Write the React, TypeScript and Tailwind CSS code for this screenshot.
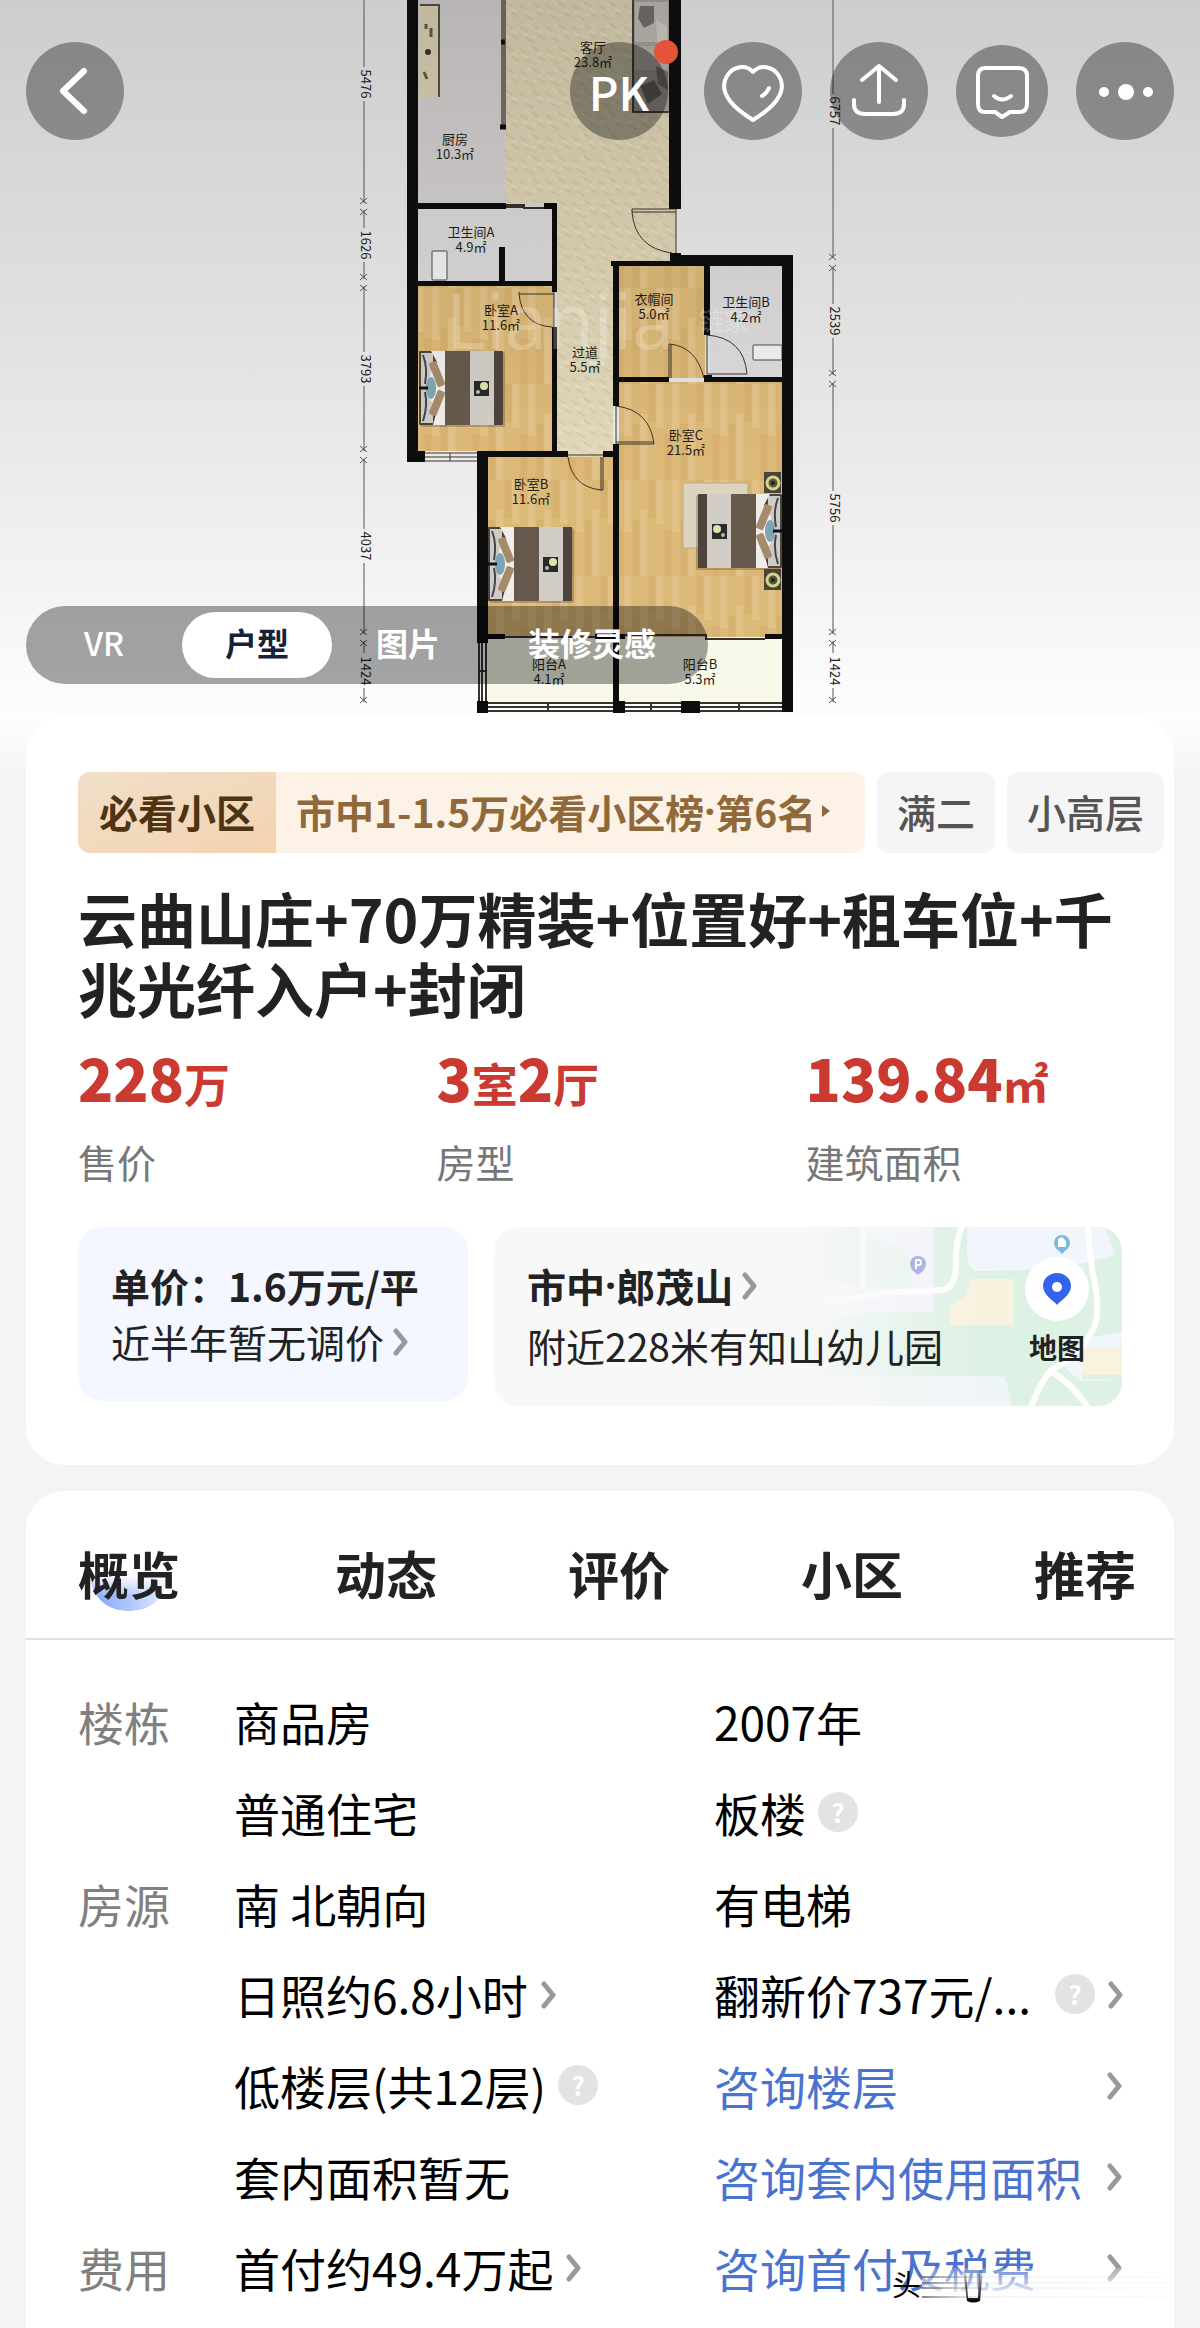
/**
 * Ficha de una vivienda: plano, datos principales y tabla de detalles
 */

import type { ReactNode } from 'react';

const fotoTabs = ['VR', '户型', '图片', '装修灵感'];

const secciones = ['动态', '评价', '小区', '推荐'];

type Celda = {
  texto: string;
  enlace?: boolean;
  ayuda?: boolean;
  flecha?: boolean;
  alFinal?: boolean;
};

const filas: { grupo: string; a: Celda; b: Celda }[] = [
  { grupo: '楼栋', a: { texto: '商品房' }, b: { texto: '2007年' } },
  { grupo: '', a: { texto: '普通住宅' }, b: { texto: '板楼', ayuda: true } },
  { grupo: '房源', a: { texto: '南 北朝向' }, b: { texto: '有电梯' } },
  {
    grupo: '',
    a: { texto: '日照约6.8小时', flecha: true },
    b: { texto: '翻新价737元/...', ayuda: true, flecha: true, alFinal: true },
  },
  {
    grupo: '',
    a: { texto: '低楼层(共12层)', ayuda: true },
    b: { texto: '咨询楼层', enlace: true, flecha: true, alFinal: true },
  },
  {
    grupo: '',
    a: { texto: '套内面积暂无' },
    b: { texto: '咨询套内使用面积', enlace: true, flecha: true, alFinal: true },
  },
  {
    grupo: '费用',
    a: { texto: '首付约49.4万起', flecha: true },
    b: { texto: '咨询首付及税费', enlace: true, flecha: true, alFinal: true },
  },
];

const cifras = [
  { etiqueta: '售价', partes: ['228', '万'] },
  { etiqueta: '房型', partes: ['3', '室', '2', '厅'] },
  { etiqueta: '建筑面积', partes: ['139.84', '㎡'] },
];

const habitaciones = [
  { nombre: '客厅', area: '23.8㎡', x: 593, y: 52 },
  { nombre: '厨房', area: '10.3㎡', x: 455, y: 144 },
  { nombre: '卫生间A', area: '4.9㎡', x: 471, y: 237 },
  { nombre: '卧室A', area: '11.6㎡', x: 501, y: 315 },
  { nombre: '过道', area: '5.5㎡', x: 585, y: 357 },
  { nombre: '衣帽间', area: '5.0㎡', x: 654, y: 304 },
  { nombre: '卫生间B', area: '4.2㎡', x: 746, y: 307 },
  { nombre: '卧室C', area: '21.5㎡', x: 686, y: 440 },
  { nombre: '卧室B', area: '11.6㎡', x: 531, y: 489 },
  { nombre: '阳台A', area: '4.1㎡', x: 549, y: 669 },
  { nombre: '阳台B', area: '5.3㎡', x: 700, y: 669 },
];

const cotas = [
  { texto: '5476', x: 364, y: 84 },
  { texto: '1626', x: 364, y: 245 },
  { texto: '3793', x: 364, y: 369 },
  { texto: '4037', x: 364, y: 546 },
  { texto: '1424', x: 364, y: 671 },
  { texto: '6757', x: 833, y: 111 },
  { texto: '2539', x: 833, y: 321 },
  { texto: '5756', x: 833, y: 508 },
  { texto: '1424', x: 833, y: 671 },
];

const lineasCota = [
  [364, 0, 67],
  [364, 101, 203],
  [364, 210, 228],
  [364, 262, 279],
  [364, 286, 352],
  [364, 386, 451],
  [364, 459, 529],
  [364, 563, 634],
  [364, 641, 653],
  [364, 688, 702],
  [833, 0, 94],
  [833, 128, 258],
  [833, 267, 304],
  [833, 338, 375],
  [833, 383, 491],
  [833, 525, 634],
  [833, 641, 653],
  [833, 688, 702],
];

const puntasCota = [
  [364, 201], [364, 212], [364, 277], [364, 288], [364, 449], [364, 460], [364, 632], [364, 643], [364, 700],
  [833, 257], [833, 268], [833, 373], [833, 384], [833, 632], [833, 643], [833, 700],
];

function Cama() {
  return (
    <g>
      <rect x="1" y="2" width="85" height="75" rx="2" fill="#00000033" />
      <rect x="0" y="1" width="84" height="74" rx="1" fill="#4f443c" />
      <rect x="2" y="3" width="12" height="70" fill="#cfcbc6" />
      <path d="M12 1H26V75H14L18 60L11 50V24L18 12Z" fill="#efedea" />
      <path d="M4 5Q9 18 6 34M4 71Q9 56 6 42" stroke="#43454c" strokeWidth="2" fill="none" />
      <rect x="14" y="11" width="8" height="26" rx="2" fill="#a48c6b" transform="rotate(-22 18 24)" />
      <rect x="14" y="40" width="8" height="26" rx="2" fill="#a48c6b" transform="rotate(22 18 53)" />
      <ellipse cx="12" cy="38" rx="5" ry="11" fill="#7fa4b3" />
      <path d="M0 38H9" stroke="#111" strokeWidth="3" />
      <rect x="26" y="1" width="25" height="74" fill="#66594c" />
      <rect x="51" y="1" width="24" height="74" fill="#d2ccc7" />
      <rect x="55" y="31" width="15" height="15" fill="#292a2b" />
      <circle cx="65" cy="36" r="4" fill="#dde2ad" />
      <circle cx="59" cy="42" r="2" fill="#b7bda5" />
    </g>
  );
}

function Mesilla({ x, y }: { x: number; y: number }) {
  return (
    <g>
      <rect x={x} y={y} width="17" height="21" fill="#4d4439" />
      <circle cx={x + 9} cy={y + 11} r="6" fill="#55563c" stroke="#d3d68a" strokeWidth="3" />
      <circle cx={x + 9} cy={y + 11} r="2" fill="#222" />
    </g>
  );
}

function Plano() {
  return (
    <svg
      className="absolute inset-0 h-full w-full"
      viewBox="0 0 1200 716"
      preserveAspectRatio="xMidYMin slice"
      fontFamily='"Noto Sans CJK SC", sans-serif'
      role="img"
      aria-label="户型图"
    >
      <defs>
        <pattern id="madera" width="48" height="96" patternUnits="userSpaceOnUse">
          <rect width="48" height="96" fill="#dcb979" />
          <path d="M4 0V52M20 30V96M36 0V44" stroke="#e3c287" strokeWidth="8" />
          <path d="M12 40V96M28 0V38M44 50V96" stroke="#d7b170" strokeWidth="7" />
          <path d="M8 0V96M24 0V96M40 0V96" stroke="#cda661" strokeWidth="1" opacity="0.4" />
        </pattern>
        <pattern id="marmol" width="26" height="22" patternUnits="userSpaceOnUse">
          <rect width="26" height="22" fill="#e0d6b8" />
          <path d="M0 5L7 9M12 2L19 7M5 15L13 20M18 13L25 17" stroke="#d8cba2" strokeWidth="2" />
          <path d="M8 3L12 5M2 11L8 14M17 9L23 11M13 14L16 16" stroke="#e8dec5" strokeWidth="2" />
        </pattern>
        <pattern id="baldosa" width="22" height="22" patternUnits="userSpaceOnUse">
          <rect width="22" height="22" fill="#dcdada" />
          <path d="M0 0H22M0 0V22" stroke="#e2e0df" strokeWidth="1" />
        </pattern>
        <linearGradient id="sombra" x1="0" y1="0" x2="0" y2="1">
          <stop offset="0" stopColor="#000" stopOpacity="0.14" />
          <stop offset="1" stopColor="#000" stopOpacity="0" />
        </linearGradient>
      </defs>

      {/* Suelos */}
      <path d="M505 0H669V209H676V261H613V457H557V203H505Z" fill="url(#marmol)" />
      <rect x="418" y="0" width="87" height="203" fill="#d6d3d2" />
      <rect x="418" y="209" width="134" height="72" fill="url(#baldosa)" />
      <rect x="710" y="266" width="72" height="111" fill="url(#baldosa)" />
      <rect x="418" y="286" width="136" height="165" fill="url(#madera)" />
      <rect x="619" y="266" width="86" height="112" fill="url(#madera)" />
      <rect x="488" y="457" width="126" height="180" fill="url(#madera)" />
      <rect x="619" y="382" width="163" height="255" fill="url(#madera)" />
      <rect x="488" y="639" width="294" height="64" fill="#f8f9e8" />

      {/* Cocina y salón */}
      <rect x="420" y="5" width="20" height="92" fill="#ded6b7" />
      <path d="M420 5H439V97" fill="none" stroke="#5a5147" strokeWidth="2" />
      <circle cx="428" cy="52" r="3" fill="#3d352b" />
      <path d="M426 24V29M431 28V37M424 72L427 79" stroke="#655d50" strokeWidth="3" />
      <rect x="501" y="0" width="5" height="128" fill="#77726a" />
      <path d="M501 42H505M500 127H506" stroke="#111" strokeWidth="5" />
      <rect x="633" y="0" width="37" height="112" rx="2" fill="#a8a19c" />
      <rect x="635" y="2" width="33" height="40" fill="#c3bcb5" />
      <rect x="635" y="46" width="33" height="24" fill="#b8b1ab" />
      <path d="M640 6H654V23L644 28L638 18Z" fill="#77716e" />
      <path d="M656 20L667 26V64L658 55Z" fill="#d4cec7" />
      <path d="M656 66L668 72V90L658 84Z" fill="#77716e" />
      <path d="M640 86L654 80L662 94L648 104Z" fill="#6a6461" />
      <path d="M633 0V112H670" fill="none" stroke="#47413d" strokeWidth="2" />

      {/* Muebles */}
      <g transform="translate(419 350)"><Cama /></g>
      <g transform="translate(488 526)"><Cama /></g>
      <rect x="683" y="483" width="65" height="65" fill="#ddd4bf" stroke="#b9a98a" />
      <g transform="translate(782 493) scale(-1 1)"><Cama /></g>
      <Mesilla x={764} y={472} />
      <Mesilla x={764} y={569} />
      <rect x="432" y="251" width="15" height="29" rx="1" fill="#f1f1f2" stroke="#4b4b4b" />
      <rect x="753" y="345" width="29" height="15" rx="1" fill="#f1f1f2" stroke="#4b4b4b" />

      {/* Puertas y ventanas */}
      <g fill="none" stroke="#38342b" strokeWidth="1">
        <path d="M676 209V254M676 212H632V209H676M632 212Q635 248 672 253" />
        <path d="M554 292V327M554 294H519V292M519 294Q522 325 552 327" />
        <path d="M669 378V344Q696 346 704 378M671 378V345" />
        <path d="M707 335Q744 338 747 374H707Z" />
        <path d="M616 406Q650 410 654 444H616V406M616 442H654" />
        <path d="M568 457Q572 487 601 490V457M603 457V490H601M568 455H603" />
        <path d="M506 205H524V208H544M506 207H524M524 205V209" strokeWidth="2" />
        <path d="M425 453H477M425 457H477M425 461H477M450 453V461" />
        <path d="M479 643V703M482 643V703M486 643V703M479 671H486" strokeWidth="2" />
        <path d="M488 703H782M488 707H782M488 711H782" strokeWidth="2" />
        <path d="M548 703V711M651 703V711M739 703V711" strokeWidth="2" />
        <path d="M505 637H595M625 635H706V639H765" strokeWidth="2" />
      </g>

      {/* Muros */}
      <g fill="#0d0d0d">
        <path d="M407 0H418V451H425V462H407Z" />
        <path d="M669 0H681V209H669Z" />
        <path d="M418 203H506V209H418ZM544 203H557V292H552V209H544Z" />
        <path d="M418 281H557V286H418ZM499 247H505V281H499Z" />
        <path d="M552 327H557V451H568V457H488V643H477V451H552Z" />
        <path d="M603 451H613V444H619V712H613V457H603Z" />
        <path d="M611 261H670V253H681V255H793V712H782V266H619V406H613V266H611Z" />
        <path d="M704 266H710V335H704ZM619 377H669V382H619ZM704 375H712V377H782V382H704Z" />
        <path d="M488 634H505V639H488ZM595 634H625V639H595ZM765 634H782V639H765Z" />
        <path d="M477 701H488V713H477ZM613 701H625V713H613ZM681 701H700V713H681Z" />
      </g>

      <path d="M418 0H669V209H676V261H782V451H418Z" fill="url(#sombra)" />

      {/* Marca de agua */}
      <text x="446" y="349" fontSize="76" fill="#fff" opacity="0.22" fontFamily='"Open Sans", sans-serif'>
        Lianjia
      </text>
      <text x="699" y="330" fontSize="25" fill="#fff" opacity="0.25">
        链家
      </text>

      {/* Cotas */}
      <g stroke="#555" strokeWidth="1">
        {lineasCota.map(([x, y1, y2]) => (
          <path key={`${x}-${y1}`} d={`M${x} ${y1}V${y2}`} />
        ))}
        {puntasCota.map(([x, y]) => (
          <path key={`${x}-${y}`} d={`M${x - 4} ${y - 3}L${x + 3} ${y + 3}M${x + 3} ${y - 3}L${x - 4} ${y + 3}`} />
        ))}
      </g>
      {cotas.map((c) => (
        <text
          key={`${c.x}-${c.y}`}
          x={c.x}
          y={c.y}
          transform={`rotate(90 ${c.x} ${c.y})`}
          dy="3"
          fontSize="13"
          textAnchor="middle"
          fill="#222"
        >
          {c.texto}
        </text>
      ))}

      {/* Nombres y superficies */}
      {habitaciones.map((h) => (
        <g key={h.nombre} fontSize="13" textAnchor="middle" fill="#1f1c17">
          <text x={h.x} y={h.y}>{h.nombre}</text>
          <text x={h.x} y={h.y + 15}>{h.area}</text>
        </g>
      ))}
    </svg>
  );
}

function BotonRedondo({ nombre, children, className }: { nombre: string; children: ReactNode; className: string }) {
  return (
    <button
      type="button"
      aria-label={nombre}
      className={`relative flex shrink-0 items-center justify-center rounded-full bg-black/35 text-white ${className}`}
    >
      {children}
    </button>
  );
}

function Flecha() {
  return (
    <svg
      viewBox="0 0 18 30"
      className="h-[30px] w-[18px] shrink-0"
      fill="none"
      stroke="#999"
      strokeWidth="5"
      strokeLinecap="round"
      strokeLinejoin="round"
      aria-hidden="true"
    >
      <path d="M4 5L13 16L4 27" />
    </svg>
  );
}

function Ayuda() {
  return (
    <button
      type="button"
      aria-label="说明"
      className="flex size-10 shrink-0 items-center justify-center rounded-full bg-[#e3e3e3] text-[26px] leading-none font-bold text-white"
    >
      ?
    </button>
  );
}

// Punto medio estrecho, el de la fuente china ocupa un carácter entero
function Punto() {
  return <span className="font-['Open_Sans',sans-serif] font-bold">·</span>;
}

function Dato({ celda }: { celda: Celda }) {
  return (
    <div className="flex items-center gap-3">
      {celda.enlace ? (
        <a href="#consulta" className="whitespace-nowrap text-[#4a73cf]">
          {celda.texto}
        </a>
      ) : (
        <span className="whitespace-nowrap">{celda.texto}</span>
      )}
      {celda.alFinal && <span className="grow" />}
      {celda.ayuda && <Ayuda />}
      {celda.flecha && <Flecha />}
    </div>
  );
}

function Mapa() {
  return (
    <svg viewBox="0 0 342 179" className="absolute top-0 right-0 h-full" preserveAspectRatio="xMaxYMid slice" aria-hidden="true">
      <defs>
        <linearGradient id="velo" x1="0" x2="1" y1="0" y2="0">
          <stop offset="0" stopColor="#f8f8f8" />
          <stop offset="0.05" stopColor="#f8f8f8" />
          <stop offset="0.6" stopColor="#f8f8f8" stopOpacity="0" />
        </linearGradient>
      </defs>
      <rect width="342" height="179" fill="#ddf1e5" />
      <path d="M84 0H153V85H90L20 100V60Q60 50 84 60Z" fill="#f1f4fc" />
      <path d="M84 12Q118 12 132 34V60H84Z" fill="#e4f2ec" />
      <path d="M187 0H325L335 28L300 37Q240 45 195 44Q187 40 187 24Z" fill="#f1f5fc" />
      <path d="M190 52H234V98H170V80L186 68Z" fill="#f8f1de" />
      <path d="M302 120H342V148H302Z" fill="#f9f2dc" />
      <path d="M302 112L342 105V120H302V152L342 154H300L284 140Z" fill="#f1f5fc" />
      <path d="M0 149H218Q228 150 228 160L232 179H0Z" fill="#eff5f7" />
      <path d="M183 -2Q176 10 176 34Q176 62 162 63L104 66L40 76" fill="none" stroke="#fff" strokeWidth="6" />
      <path d="M83 0V62" stroke="#fff" strokeWidth="5" />
      <path d="M308 0Q310 36 316 62Q320 92 312 104Q300 128 270 144Q258 160 251 181M270 144Q292 156 308 181" fill="none" stroke="#fff" strokeWidth="6" />
      <rect width="342" height="179" fill="url(#velo)" />
      <path d="M138 48L132 43H144Z" fill="#aeb4e8" />
      <circle cx="138" cy="37" r="8" fill="#aeb4e8" />
      <path d="M136 42V33H139Q141 33 141 36Q141 38 139 38H136" fill="none" stroke="#fff" strokeWidth="2" />
      <path d="M282 27L276 21H288Z" fill="#80b8da" />
      <circle cx="282" cy="16" r="8" fill="#80b8da" />
      <path d="M278 20V12L282 10L286 14V20Z" fill="#fff" />
    </svg>
  );
}

function Cabecera() {
  return (
    <section className="relative flex min-h-[716px] flex-col justify-between bg-linear-to-b from-[#cdcdcd] via-[#e3e3e3] to-[#fdfdfd]">
      <Plano />

      <header className="relative flex items-start justify-between px-[26px] pt-[42px]">
        <BotonRedondo nombre="返回" className="size-[98px]">
          <svg viewBox="0 0 98 98" className="size-full" fill="none" stroke="currentColor" strokeWidth="6" strokeLinecap="round" strokeLinejoin="round">
            <path d="M58 29L37 49L58 69" />
          </svg>
        </BotonRedondo>
        <div className="flex items-center gap-7">
          <BotonRedondo nombre="PK" className="mr-2 size-[98px] text-[46px] font-medium">
            PK
            <span className="absolute -top-0.5 -right-2.5 size-6 rounded-full bg-[#e5533b]" />
          </BotonRedondo>
          <BotonRedondo nombre="收藏" className="size-[98px]">
            <svg viewBox="0 0 98 98" className="size-full" fill="none" stroke="currentColor" strokeWidth="4" strokeLinecap="round" strokeLinejoin="round">
              <path d="M49 30C42 22 29 24 23 34C18 42 20 51 26 59C32 67 41 73 49 78C57 73 66 67 72 59C78 51 80 42 75 34C69 24 56 22 49 30Z" />
              <path d="M65 46Q63 51 58 54" />
            </svg>
          </BotonRedondo>
          <BotonRedondo nombre="分享" className="size-[98px]">
            <svg viewBox="0 0 98 98" className="size-full" fill="none" stroke="currentColor" strokeWidth="4" strokeLinecap="round" strokeLinejoin="round">
              <path d="M49 60V24M32 38L49 24L66 38M24 58V62Q24 72 35 72H63Q74 72 74 62V58" />
            </svg>
          </BotonRedondo>
          <BotonRedondo nombre="消息" className="size-[92px]">
            <svg viewBox="0 0 92 92" className="size-full" fill="none" stroke="currentColor" strokeWidth="4" strokeLinecap="round" strokeLinejoin="round">
              <path d="M29 23H63Q71 23 71 31V59Q71 67 63 67H54L46 72L39 67H29Q22 67 22 59V31Q22 23 29 23Z" />
              <path d="M38 51Q46 58 55 51" />
            </svg>
          </BotonRedondo>
          <BotonRedondo nombre="更多" className="size-[98px]">
            <svg viewBox="0 0 98 98" className="size-full" fill="currentColor">
              <circle cx="28" cy="50" r="5" />
              <circle cx="50" cy="50" r="8" />
              <circle cx="72" cy="50" r="5" />
            </svg>
          </BotonRedondo>
        </div>
      </header>

      <div className="relative px-[26px] pb-8">
        <div className="inline-flex h-[78px] items-center rounded-full bg-black/35 pr-2 text-[32px] leading-[60px] font-bold text-white">
          {fotoTabs.map((tab) => (
            <button
              key={tab}
              type="button"
              className={
                tab === '户型'
                  ? 'h-[66px] rounded-full bg-white px-[43px] pb-1.5 text-[#17213a]'
                  : tab === 'VR'
                    ? 'h-[66px] px-[58px] pb-1.5 font-medium'
                    : 'h-[66px] px-11 pb-1.5'
              }
            >
              {tab}
            </button>
          ))}
        </div>
      </div>
    </section>
  );
}

function Resumen() {
  return (
    <div className="bg-[linear-gradient(#fdfdfd,#f4f4f4_64px)] px-[26px]">
      <section className="rounded-[38px] bg-white pt-14 pr-2.5 pb-[59px] pl-[52px]">
        {/* Etiquetas */}
        <div className="flex gap-3 text-[39px] leading-[78px] whitespace-nowrap">
          <a href="#ranking" className="flex grow overflow-hidden rounded-xl bg-[#fdf2e6] font-bold text-[#8f693a]">
            <span className="bg-linear-to-br from-[#f0dfc9] to-[#f3d3b0] px-[21px] pb-[3px] text-[#4e3413]">必看小区</span>
            <span className="flex grow items-center pb-[3px] pl-5">
              市中1-1.5万必看小区榜
              <Punto />
              第6名
              <svg viewBox="0 0 12 14" className="ml-1 h-3.5 w-3" fill="currentColor" aria-hidden="true">
                <path d="M2 1L10 7L2 13Z" />
              </svg>
            </span>
          </a>
          <span className="rounded-xl bg-[#f5f5f5] px-5 pb-[3px] font-medium text-[#555]">满二</span>
          <span className="rounded-xl bg-[#f5f5f5] px-5 pb-[3px] font-medium text-[#555]">小高层</span>
        </div>

        <h1 className="mt-[30px] text-[59px] leading-[70px] font-bold text-[#222]">
          云曲山庄+70万精装+位置好+租车位+千兆光纤入户+封闭
        </h1>

        {/* Cifras principales */}
        <dl className="mt-[22px] grid grid-cols-[33%_34%_1fr]">
          {cifras.map((cifra) => (
            <div key={cifra.etiqueta} className="flex flex-col-reverse gap-[19px]">
              <dt className="text-[39px] leading-14 text-[#777]">{cifra.etiqueta}</dt>
              <dd className="text-[58px] leading-16 font-black text-[#ca3a31]">
                {cifra.partes.map((parte, i) => (
                  <span key={parte} className={i % 2 ? 'text-[46px] font-bold' : ''}>
                    {parte}
                  </span>
                ))}
              </dd>
            </div>
          ))}
        </dl>

        {/* Precio y ubicación */}
        <div className="mt-[38px] mr-[42px] flex items-start gap-[26px] text-[39px] leading-14 whitespace-nowrap text-[#222]">
          <a href="#precio" className="block w-[390px] rounded-3xl bg-[#f4f7ff] px-[33px] pt-[30px] pb-8">
            <p className="font-bold">单价：1.6万元/平</p>
            <p className="flex items-center gap-2">
              近半年暂无调价
              <Flecha />
            </p>
          </a>
          <div className="relative flex grow items-start justify-between overflow-hidden rounded-3xl bg-[#f8f8f8] px-[33px] pt-[30px] pb-[33px]">
            <Mapa />
            <div className="relative flex flex-col gap-1">
              <p className="flex items-center font-bold">
                市中
                <Punto />
                郎茂山
                <span className="ml-2">
                  <Flecha />
                </span>
              </p>
              <p>附近228米有知山幼儿园</p>
            </div>
            <button type="button" className="relative flex flex-col items-center gap-1.5 text-[28px] leading-10 font-bold">
              <span className="flex size-16 items-center justify-center rounded-full bg-white">
                <svg viewBox="0 0 28 32" className="h-8 w-7" aria-hidden="true">
                  <path d="M14 32C10 27 0 22 0 13A14 13 0 0 1 28 13C28 22 18 27 14 32Z" fill="#3264ed" />
                  <circle cx="14" cy="14" r="5" fill="#fff" />
                </svg>
              </span>
              地图
            </button>
          </div>
        </div>
      </section>
    </div>
  );
}

function Detalles() {
  return (
    <section className="relative mx-[26px] mt-[26px] grow rounded-t-[38px] bg-white pt-[46px]">
      <nav className="flex justify-between border-b-2 border-[#e0e0e0] pr-[38px] pb-[29px] pl-[52px] text-[51px] leading-[72px] font-bold text-[#222]">
        <button type="button" className="relative mr-6">
          <span className="absolute -bottom-0.5 left-3 h-9 w-[78px] rounded-b-full bg-linear-to-r from-[#7fa0f6] to-[#e4ecff] mask-t-from-40%" />
          <span className="relative">概览</span>
        </button>
        {secciones.map((s) => (
          <button key={s} type="button">
            {s}
          </button>
        ))}
      </nav>

      <table className="mt-[35px] w-full table-fixed text-[46px] leading-[60px] text-black">
        <colgroup>
          <col className="w-[208px]" />
          <col className="w-[480px]" />
          <col />
        </colgroup>
        <tbody>
          {filas.map((fila) => (
            <tr key={fila.a.texto} className="h-[91px]">
              <th scope="row" className="pl-[52px] text-left font-normal text-[#808080]">
                {fila.grupo}
              </th>
              <td>
                <Dato celda={fila.a} />
              </td>
              <td className="pr-[50px]">
                <Dato celda={fila.b} />
              </td>
            </tr>
          ))}
        </tbody>
      </table>

      {/* Velo difuminado sobre la última fila */}
      <div className="pointer-events-none absolute right-0 bottom-6 h-9 w-[282px]">
        <svg
          viewBox="0 0 282 36"
          className="h-full w-full overflow-visible"
          fontFamily='"Noto Sans CJK SC", sans-serif'
          aria-hidden="true"
        >
          <defs>
            <linearGradient id="bruma" x1="0" y1="0" x2="0" y2="1">
              <stop offset="0" stopColor="#fff" stopOpacity="0.2" />
              <stop offset="0.8" stopColor="#fff" stopOpacity="0.95" />
              <stop offset="1" stopColor="#fff" />
            </linearGradient>
            <linearGradient id="trazo" x1="0" y1="0" x2="0" y2="1">
              <stop offset="0" stopColor="#000" stopOpacity="0.1" />
              <stop offset="1" stopColor="#000" />
            </linearGradient>
            <linearGradient id="estela" x1="0" y1="0" x2="1" y2="0">
              <stop offset="0" stopColor="#555" stopOpacity="0.7" />
              <stop offset="0.25" stopColor="#999" stopOpacity="0.1" />
              <stop offset="1" stopColor="#999" stopOpacity="0.03" />
            </linearGradient>
          </defs>
          <rect x="30" width="252" height="36" fill="url(#bruma)" />
          <path d="M30 8H282V10H30ZM30 14H282V16H30ZM30 19H282V21H30ZM30 28H282V30H30Z" fill="url(#estela)" />
          <path d="M71 2L75 33Q81 36 88 33L91 2H87L86 30H76L74 2Z" fill="url(#trazo)" />
          <text x="0" y="28" fontSize="29" fill="#000">
            头
          </text>
        </svg>
      </div>
    </section>
  );
}

export default function App() {
  return (
    <main className="flex min-h-screen flex-col bg-[#f4f4f4] font-['Noto_Sans_CJK_SC',sans-serif]">
      <Cabecera />
      <Resumen />
      <Detalles />
    </main>
  );
}
